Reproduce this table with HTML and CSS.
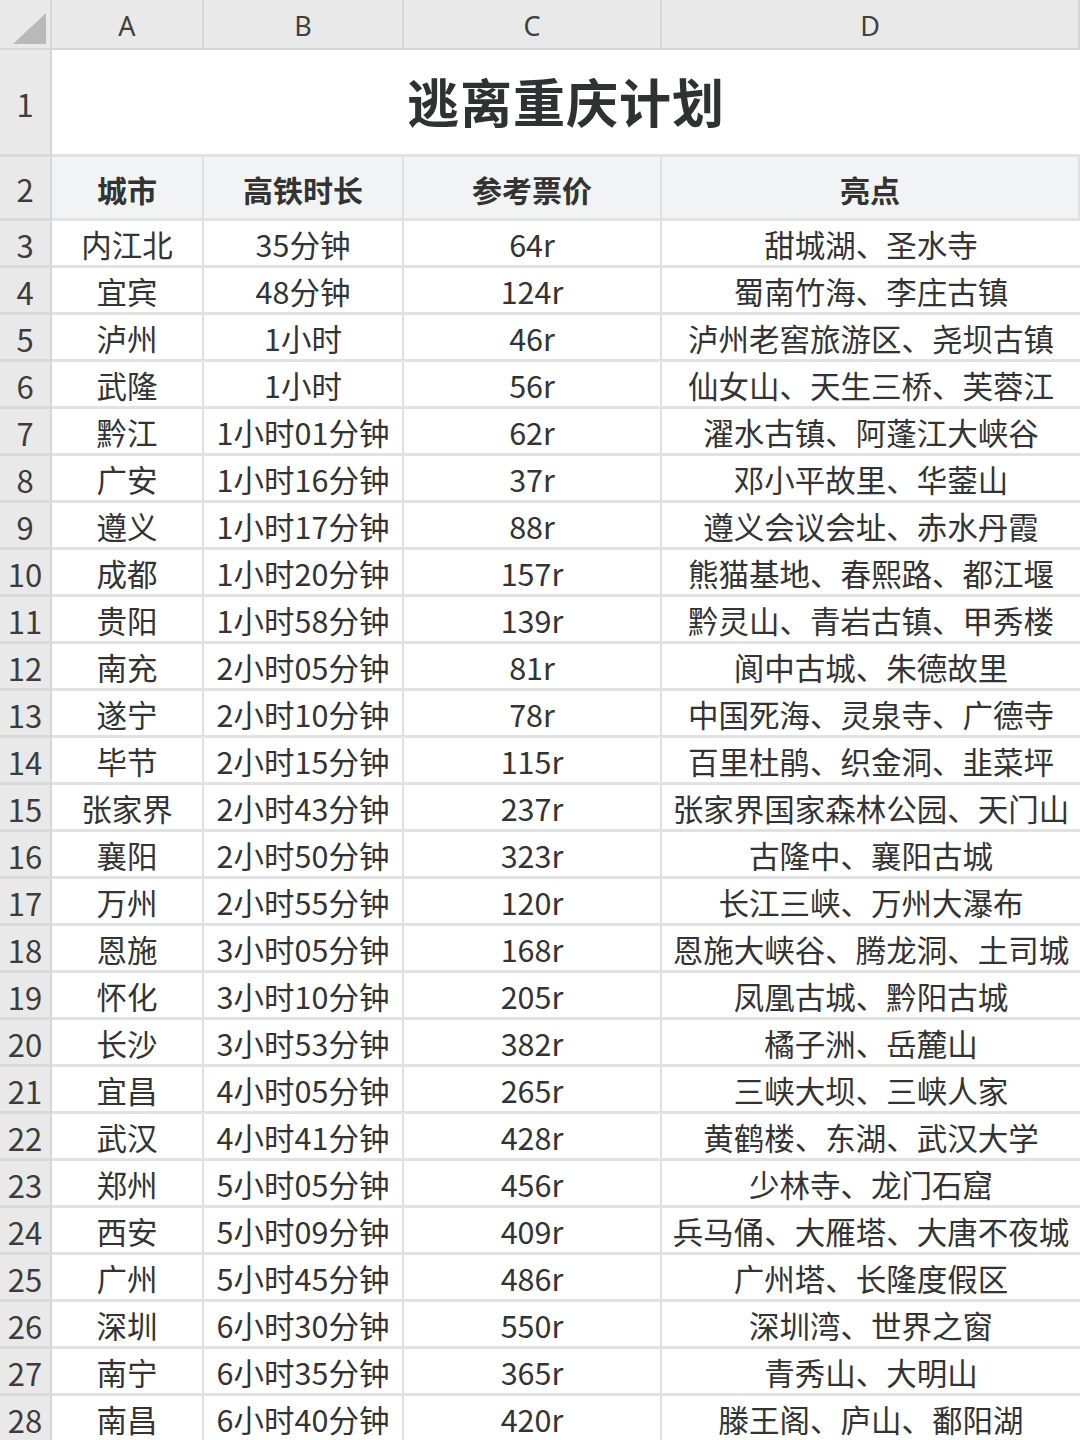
FILE: index.html
```html
<!DOCTYPE html>
<html lang="zh-CN">
<head>
<meta charset="utf-8">
<title>逃离重庆计划</title>
<link rel="stylesheet" href="styles.css">
</head>
<body>
<div class="sheet" id="sheet">
  <div class="cell corner"><svg class="tri" width="52" height="50" viewBox="0 0 52 50"><polygon points="13,44 46,44 46,13" fill="#b9b9b9"/></svg></div>
  <div class="cell colh">A</div>
  <div class="cell colh">B</div>
  <div class="cell colh">C</div>
  <div class="cell colh">D</div>

  <div class="cell rowh r1">1</div>
  <div class="cell title">逃离重庆计划</div>

  <div class="cell rowh r2">2</div>
  <div class="cell head">城市</div>
  <div class="cell head">高铁时长</div>
  <div class="cell head">参考票价</div>
  <div class="cell head">亮点</div>
</div>
<script src="script.js"></script>
</body>
</html>
```

FILE: styles.css
```css
html, body {
  margin: 0;
  padding: 0;
  background: #ffffff;
}
body {
  width: 1080px;
  height: 1440px;
  overflow: hidden;
  font-family: "Noto Sans CJK SC", "Noto Sans", sans-serif;
  color: #333333;
}
.sheet {
  display: grid;
  grid-template-columns: 52px 152px 200px 258px 418px;
  grid-template-rows: 50px 107px 64px;
  grid-auto-rows: 47px;
}
.cell {
  box-sizing: border-box;
  display: flex;
  align-items: center;
  justify-content: center;
  border-right: 2px solid #e0e0e0;
  border-bottom: 3px solid #e2e2e2;
  white-space: nowrap;
  font-size: 30.5px;
  line-height: 1;
}
.corner {
  background: #e9e9e9;
  border-right: 2px solid #d6d6d6;
  border-bottom: 2px solid #d6d6d6;
  position: relative;
}
.tri {
  position: absolute;
  left: 0;
  top: 0;
}
.colh {
  background: #e9e9e9;
  border-right: 2px solid #d6d6d6;
  border-bottom: 2px solid #d6d6d6;
  font-family: "Noto Sans", "Noto Sans CJK SC", sans-serif;
  font-size: 27px;
  color: #404040;
  padding-top: 2px;
}
.rowh {
  background: #e9e9e9;
  border-right: 2px solid #d6d6d6;
  border-bottom: 3px solid #dadada;
  font-family: "Noto Sans CJK SC", sans-serif;
  font-size: 31px;
  color: #3c3c3c;
  padding-top: 2px;
}
.title {
  grid-column: 2 / 6;
  font-size: 52px;
  font-weight: 700;
  color: #2f3133;
  letter-spacing: 1px;
  border-right: none;
  padding-bottom: 2px;
}
.head {
  background: #f2f3f4;
  font-weight: 700;
  font-size: 30px;
  color: #333333;
  padding-top: 2px;
}
.data {
  background: #ffffff;
  padding-top: 2px;
}
.last {
  border-right: none;
}
```

FILE: script.js
```js
(function () {
  var rows = [
    ["内江北", "35分钟", "64r", "甜城湖、圣水寺"],
    ["宜宾", "48分钟", "124r", "蜀南竹海、李庄古镇"],
    ["泸州", "1小时", "46r", "泸州老窖旅游区、尧坝古镇"],
    ["武隆", "1小时", "56r", "仙女山、天生三桥、芙蓉江"],
    ["黔江", "1小时01分钟", "62r", "濯水古镇、阿蓬江大峡谷"],
    ["广安", "1小时16分钟", "37r", "邓小平故里、华蓥山"],
    ["遵义", "1小时17分钟", "88r", "遵义会议会址、赤水丹霞"],
    ["成都", "1小时20分钟", "157r", "熊猫基地、春熙路、都江堰"],
    ["贵阳", "1小时58分钟", "139r", "黔灵山、青岩古镇、甲秀楼"],
    ["南充", "2小时05分钟", "81r", "阆中古城、朱德故里"],
    ["遂宁", "2小时10分钟", "78r", "中国死海、灵泉寺、广德寺"],
    ["毕节", "2小时15分钟", "115r", "百里杜鹃、织金洞、韭菜坪"],
    ["张家界", "2小时43分钟", "237r", "张家界国家森林公园、天门山"],
    ["襄阳", "2小时50分钟", "323r", "古隆中、襄阳古城"],
    ["万州", "2小时55分钟", "120r", "长江三峡、万州大瀑布"],
    ["恩施", "3小时05分钟", "168r", "恩施大峡谷、腾龙洞、土司城"],
    ["怀化", "3小时10分钟", "205r", "凤凰古城、黔阳古城"],
    ["长沙", "3小时53分钟", "382r", "橘子洲、岳麓山"],
    ["宜昌", "4小时05分钟", "265r", "三峡大坝、三峡人家"],
    ["武汉", "4小时41分钟", "428r", "黄鹤楼、东湖、武汉大学"],
    ["郑州", "5小时05分钟", "456r", "少林寺、龙门石窟"],
    ["西安", "5小时09分钟", "409r", "兵马俑、大雁塔、大唐不夜城"],
    ["广州", "5小时45分钟", "486r", "广州塔、长隆度假区"],
    ["深圳", "6小时30分钟", "550r", "深圳湾、世界之窗"],
    ["南宁", "6小时35分钟", "365r", "青秀山、大明山"],
    ["南昌", "6小时40分钟", "420r", "滕王阁、庐山、鄱阳湖"]
  ];
  var sheet = document.getElementById("sheet");
  rows.forEach(function (r, i) {
    var h = document.createElement("div");
    h.className = "cell rowh";
    h.textContent = String(i + 3);
    sheet.appendChild(h);
    r.forEach(function (v, j) {
      var c = document.createElement("div");
      c.className = "cell data" + (j === 3 ? " last" : "");
      c.textContent = v;
      sheet.appendChild(c);
    });
  });
})();
```
